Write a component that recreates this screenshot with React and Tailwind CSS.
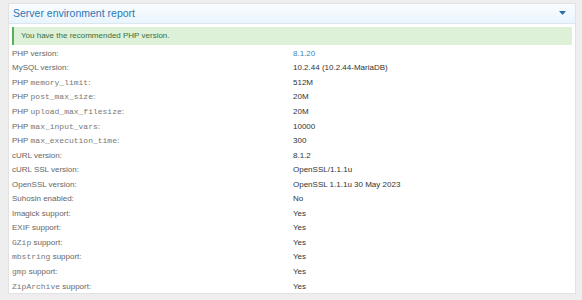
import React from "react";

const rows = [
  { pre: "PHP", code: null, label: "version", value: "8.1.20", link: true },
  { pre: "MySQL version", value: "10.2.44 (10.2.44-MariaDB)" },
  { pre: "PHP", code: "memory_limit", value: "512M" },
  { pre: "PHP", code: "post_max_size", value: "20M" },
  { pre: "PHP", code: "upload_max_filesize", value: "20M" },
  { pre: "PHP", code: "max_input_vars", value: "10000" },
  { pre: "PHP", code: "max_execution_time", value: "300" },
  { pre: "cURL version", value: "8.1.2" },
  { pre: "cURL SSL version", value: "OpenSSL/1.1.1u" },
  { pre: "OpenSSL version", value: "OpenSSL 1.1.1u 30 May 2023" },
  { pre: "Suhosin enabled", value: "No" },
  { pre: "Imagick support", value: "Yes" },
  { pre: "EXIF support", value: "Yes" },
  { code: "GZip", label: "support", value: "Yes" },
  { code: "mbstring", label: "support", value: "Yes" },
  { code: "gmp", label: "support", value: "Yes" },
  { code: "ZipArchive", label: "support", value: "Yes" },
];

const Label = ({ row }) => {
  if (row.code === undefined || (row.code === null && !row.label)) {
    return <span>{row.pre}:</span>;
  }
  return (
    <span>
      {row.pre && <span>{row.pre} </span>}
      {row.code && (
        <span className="font-['Liberation_Mono',monospace] text-[8px] text-[#777]">
          {row.code}
        </span>
      )}
      {row.label && <span>{row.code ? " " : ""}{row.label}</span>}
      :
    </span>
  );
};

export default function App() {
  return (
    <div className="w-[582px] h-[300px] bg-[#eeeeee] pt-[3px] pl-[8px] pr-[6px] font-['Liberation_Sans',Arial,sans-serif]">
      <div className="bg-white border border-[#e2e2e2] h-[291px]">
        {/* header */}
        <div className="h-[20px] flex items-center justify-between px-[4px] bg-gradient-to-b from-[#fafdff] to-[#e9f4fd] border-b border-[#dbe6ef]">
          <span className="text-[10.5px] text-[#2a77b3] leading-none">Server environment report</span>
          <svg width="7" height="4" viewBox="0 0 7 4" className="mr-[5px] -mt-[1px]">
            <polygon points="0,0 7,0 3.5,4" fill="#2a6fa5" />
          </svg>
        </div>

        {/* notice */}
        <div className="mx-[3px] mt-[3px] h-[18px] flex items-center bg-[#dcf1d8] border-l-2 border-[#5cae5c] pl-[7px] text-[8px] text-[#3b6e3b]">
          You have the recommended PHP version.
        </div>

        {/* rows */}
        <div className="mt-[1.5px] px-[3px]">
          {rows.map((row, i) => (
            <div key={i} className="flex items-center h-[14.56px] text-[8px]">
              <div className="w-[281px] text-[#666]">
                <Label row={row} />
              </div>
              <div className={row.link ? "text-[#3d86bd]" : "text-[#333]"}>{row.value}</div>
            </div>
          ))}
        </div>
      </div>
    </div>
  );
}
